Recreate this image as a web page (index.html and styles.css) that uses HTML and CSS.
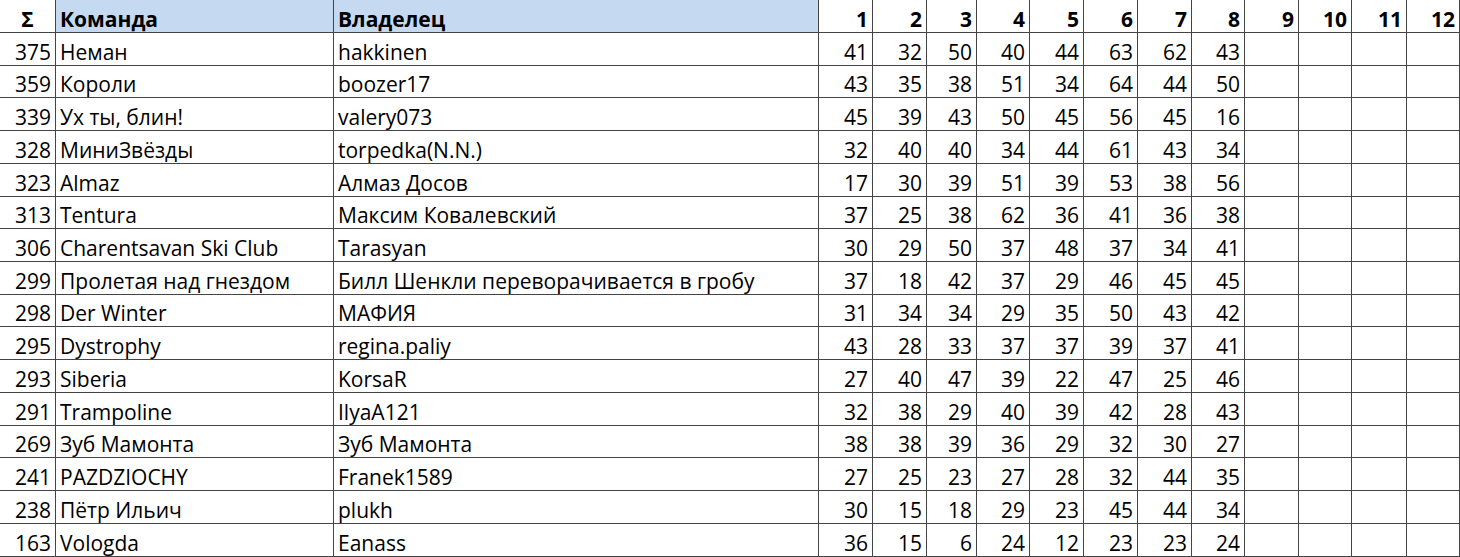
FILE: index.html
```html
<!DOCTYPE html>
<html lang="ru">
<head>
<meta charset="utf-8">
<title>Таблица</title>
<link rel="stylesheet" href="styles.css">
</head>
<body>
<div class="sheet">
  <div class="c hd center">Σ</div>
  <div class="c hd blue">Команда</div>
  <div class="c hd blue">Владелец</div>
  <div class="c hd num">1</div><div class="c hd num">2</div><div class="c hd num">3</div><div class="c hd num">4</div><div class="c hd num">5</div><div class="c hd num">6</div><div class="c hd num">7</div><div class="c hd num">8</div><div class="c hd num">9</div><div class="c hd num">10</div><div class="c hd num">11</div><div class="c hd num">12</div>

  <div class="c num">375</div><div class="c">Неман</div><div class="c">hakkinen</div>
  <div class="c num">41</div><div class="c num">32</div><div class="c num">50</div><div class="c num">40</div><div class="c num">44</div><div class="c num">63</div><div class="c num">62</div><div class="c num">43</div><div class="c"></div><div class="c"></div><div class="c"></div><div class="c"></div>

  <div class="c num">359</div><div class="c">Короли</div><div class="c">boozer17</div>
  <div class="c num">43</div><div class="c num">35</div><div class="c num">38</div><div class="c num">51</div><div class="c num">34</div><div class="c num">64</div><div class="c num">44</div><div class="c num">50</div><div class="c"></div><div class="c"></div><div class="c"></div><div class="c"></div>

  <div class="c num">339</div><div class="c">Ух ты, блин!</div><div class="c">valery073</div>
  <div class="c num">45</div><div class="c num">39</div><div class="c num">43</div><div class="c num">50</div><div class="c num">45</div><div class="c num">56</div><div class="c num">45</div><div class="c num">16</div><div class="c"></div><div class="c"></div><div class="c"></div><div class="c"></div>

  <div class="c num">328</div><div class="c">МиниЗвёзды</div><div class="c">torpedka(N.N.)</div>
  <div class="c num">32</div><div class="c num">40</div><div class="c num">40</div><div class="c num">34</div><div class="c num">44</div><div class="c num">61</div><div class="c num">43</div><div class="c num">34</div><div class="c"></div><div class="c"></div><div class="c"></div><div class="c"></div>

  <div class="c num">323</div><div class="c">Almaz</div><div class="c">Алмаз Досов</div>
  <div class="c num">17</div><div class="c num">30</div><div class="c num">39</div><div class="c num">51</div><div class="c num">39</div><div class="c num">53</div><div class="c num">38</div><div class="c num">56</div><div class="c"></div><div class="c"></div><div class="c"></div><div class="c"></div>

  <div class="c num">313</div><div class="c">Tentura</div><div class="c">Максим Ковалевский</div>
  <div class="c num">37</div><div class="c num">25</div><div class="c num">38</div><div class="c num">62</div><div class="c num">36</div><div class="c num">41</div><div class="c num">36</div><div class="c num">38</div><div class="c"></div><div class="c"></div><div class="c"></div><div class="c"></div>

  <div class="c num">306</div><div class="c">Charentsavan Ski Club</div><div class="c">Tarasyan</div>
  <div class="c num">30</div><div class="c num">29</div><div class="c num">50</div><div class="c num">37</div><div class="c num">48</div><div class="c num">37</div><div class="c num">34</div><div class="c num">41</div><div class="c"></div><div class="c"></div><div class="c"></div><div class="c"></div>

  <div class="c num">299</div><div class="c">Пролетая над гнездом</div><div class="c">Билл Шенкли переворачивается в гробу</div>
  <div class="c num">37</div><div class="c num">18</div><div class="c num">42</div><div class="c num">37</div><div class="c num">29</div><div class="c num">46</div><div class="c num">45</div><div class="c num">45</div><div class="c"></div><div class="c"></div><div class="c"></div><div class="c"></div>

  <div class="c num">298</div><div class="c">Der Winter</div><div class="c">МАФИЯ</div>
  <div class="c num">31</div><div class="c num">34</div><div class="c num">34</div><div class="c num">29</div><div class="c num">35</div><div class="c num">50</div><div class="c num">43</div><div class="c num">42</div><div class="c"></div><div class="c"></div><div class="c"></div><div class="c"></div>

  <div class="c num">295</div><div class="c">Dystrophy</div><div class="c">regina.paliy</div>
  <div class="c num">43</div><div class="c num">28</div><div class="c num">33</div><div class="c num">37</div><div class="c num">37</div><div class="c num">39</div><div class="c num">37</div><div class="c num">41</div><div class="c"></div><div class="c"></div><div class="c"></div><div class="c"></div>

  <div class="c num">293</div><div class="c">Siberia</div><div class="c">KorsaR</div>
  <div class="c num">27</div><div class="c num">40</div><div class="c num">47</div><div class="c num">39</div><div class="c num">22</div><div class="c num">47</div><div class="c num">25</div><div class="c num">46</div><div class="c"></div><div class="c"></div><div class="c"></div><div class="c"></div>

  <div class="c num">291</div><div class="c">Trampoline</div><div class="c">IlyaA121</div>
  <div class="c num">32</div><div class="c num">38</div><div class="c num">29</div><div class="c num">40</div><div class="c num">39</div><div class="c num">42</div><div class="c num">28</div><div class="c num">43</div><div class="c"></div><div class="c"></div><div class="c"></div><div class="c"></div>

  <div class="c num">269</div><div class="c">Зуб Мамонта</div><div class="c">Зуб Мамонта</div>
  <div class="c num">38</div><div class="c num">38</div><div class="c num">39</div><div class="c num">36</div><div class="c num">29</div><div class="c num">32</div><div class="c num">30</div><div class="c num">27</div><div class="c"></div><div class="c"></div><div class="c"></div><div class="c"></div>

  <div class="c num">241</div><div class="c">PAZDZIOCHY</div><div class="c">Franek1589</div>
  <div class="c num">27</div><div class="c num">25</div><div class="c num">23</div><div class="c num">27</div><div class="c num">28</div><div class="c num">32</div><div class="c num">44</div><div class="c num">35</div><div class="c"></div><div class="c"></div><div class="c"></div><div class="c"></div>

  <div class="c num">238</div><div class="c">Пётр Ильич</div><div class="c">plukh</div>
  <div class="c num">30</div><div class="c num">15</div><div class="c num">18</div><div class="c num">29</div><div class="c num">23</div><div class="c num">45</div><div class="c num">44</div><div class="c num">34</div><div class="c"></div><div class="c"></div><div class="c"></div><div class="c"></div>

  <div class="c num">163</div><div class="c">Vologda</div><div class="c">Eanass</div>
  <div class="c num">36</div><div class="c num">15</div><div class="c num">6</div><div class="c num">24</div><div class="c num">12</div><div class="c num">23</div><div class="c num">23</div><div class="c num">24</div><div class="c"></div><div class="c"></div><div class="c"></div><div class="c"></div>
</div>
</body>
</html>
```

FILE: styles.css
```css
html, body {
  margin: 0;
  padding: 0;
  background: #ffffff;
}

.sheet {
  display: grid;
  grid-template-columns: 56px 278px 485px 54px 54px 50px 53px 54px 54px 54px 53px 54px 53px 55px 53px;
  grid-template-rows: 33px repeat(16, 32.72px);
  font-family: "Open Sans", "Liberation Sans", Arial, sans-serif;
  font-size: 21px;
  color: #000000;
}

.c {
  box-sizing: border-box;
  border-right: 1px solid #444444;
  border-bottom: 1px solid #444444;
  display: flex;
  align-items: flex-end;
  justify-content: flex-start;
  padding: 0 4px 2px 4px;
  line-height: 1;
  white-space: nowrap;
  overflow: hidden;
}

.num {
  justify-content: flex-end;
  padding: 0 4px 2px 2px;
}

.center {
  justify-content: center;
}

.hd {
  font-weight: bold;
}

.blue {
  background: #c5d9f1;
}
```
